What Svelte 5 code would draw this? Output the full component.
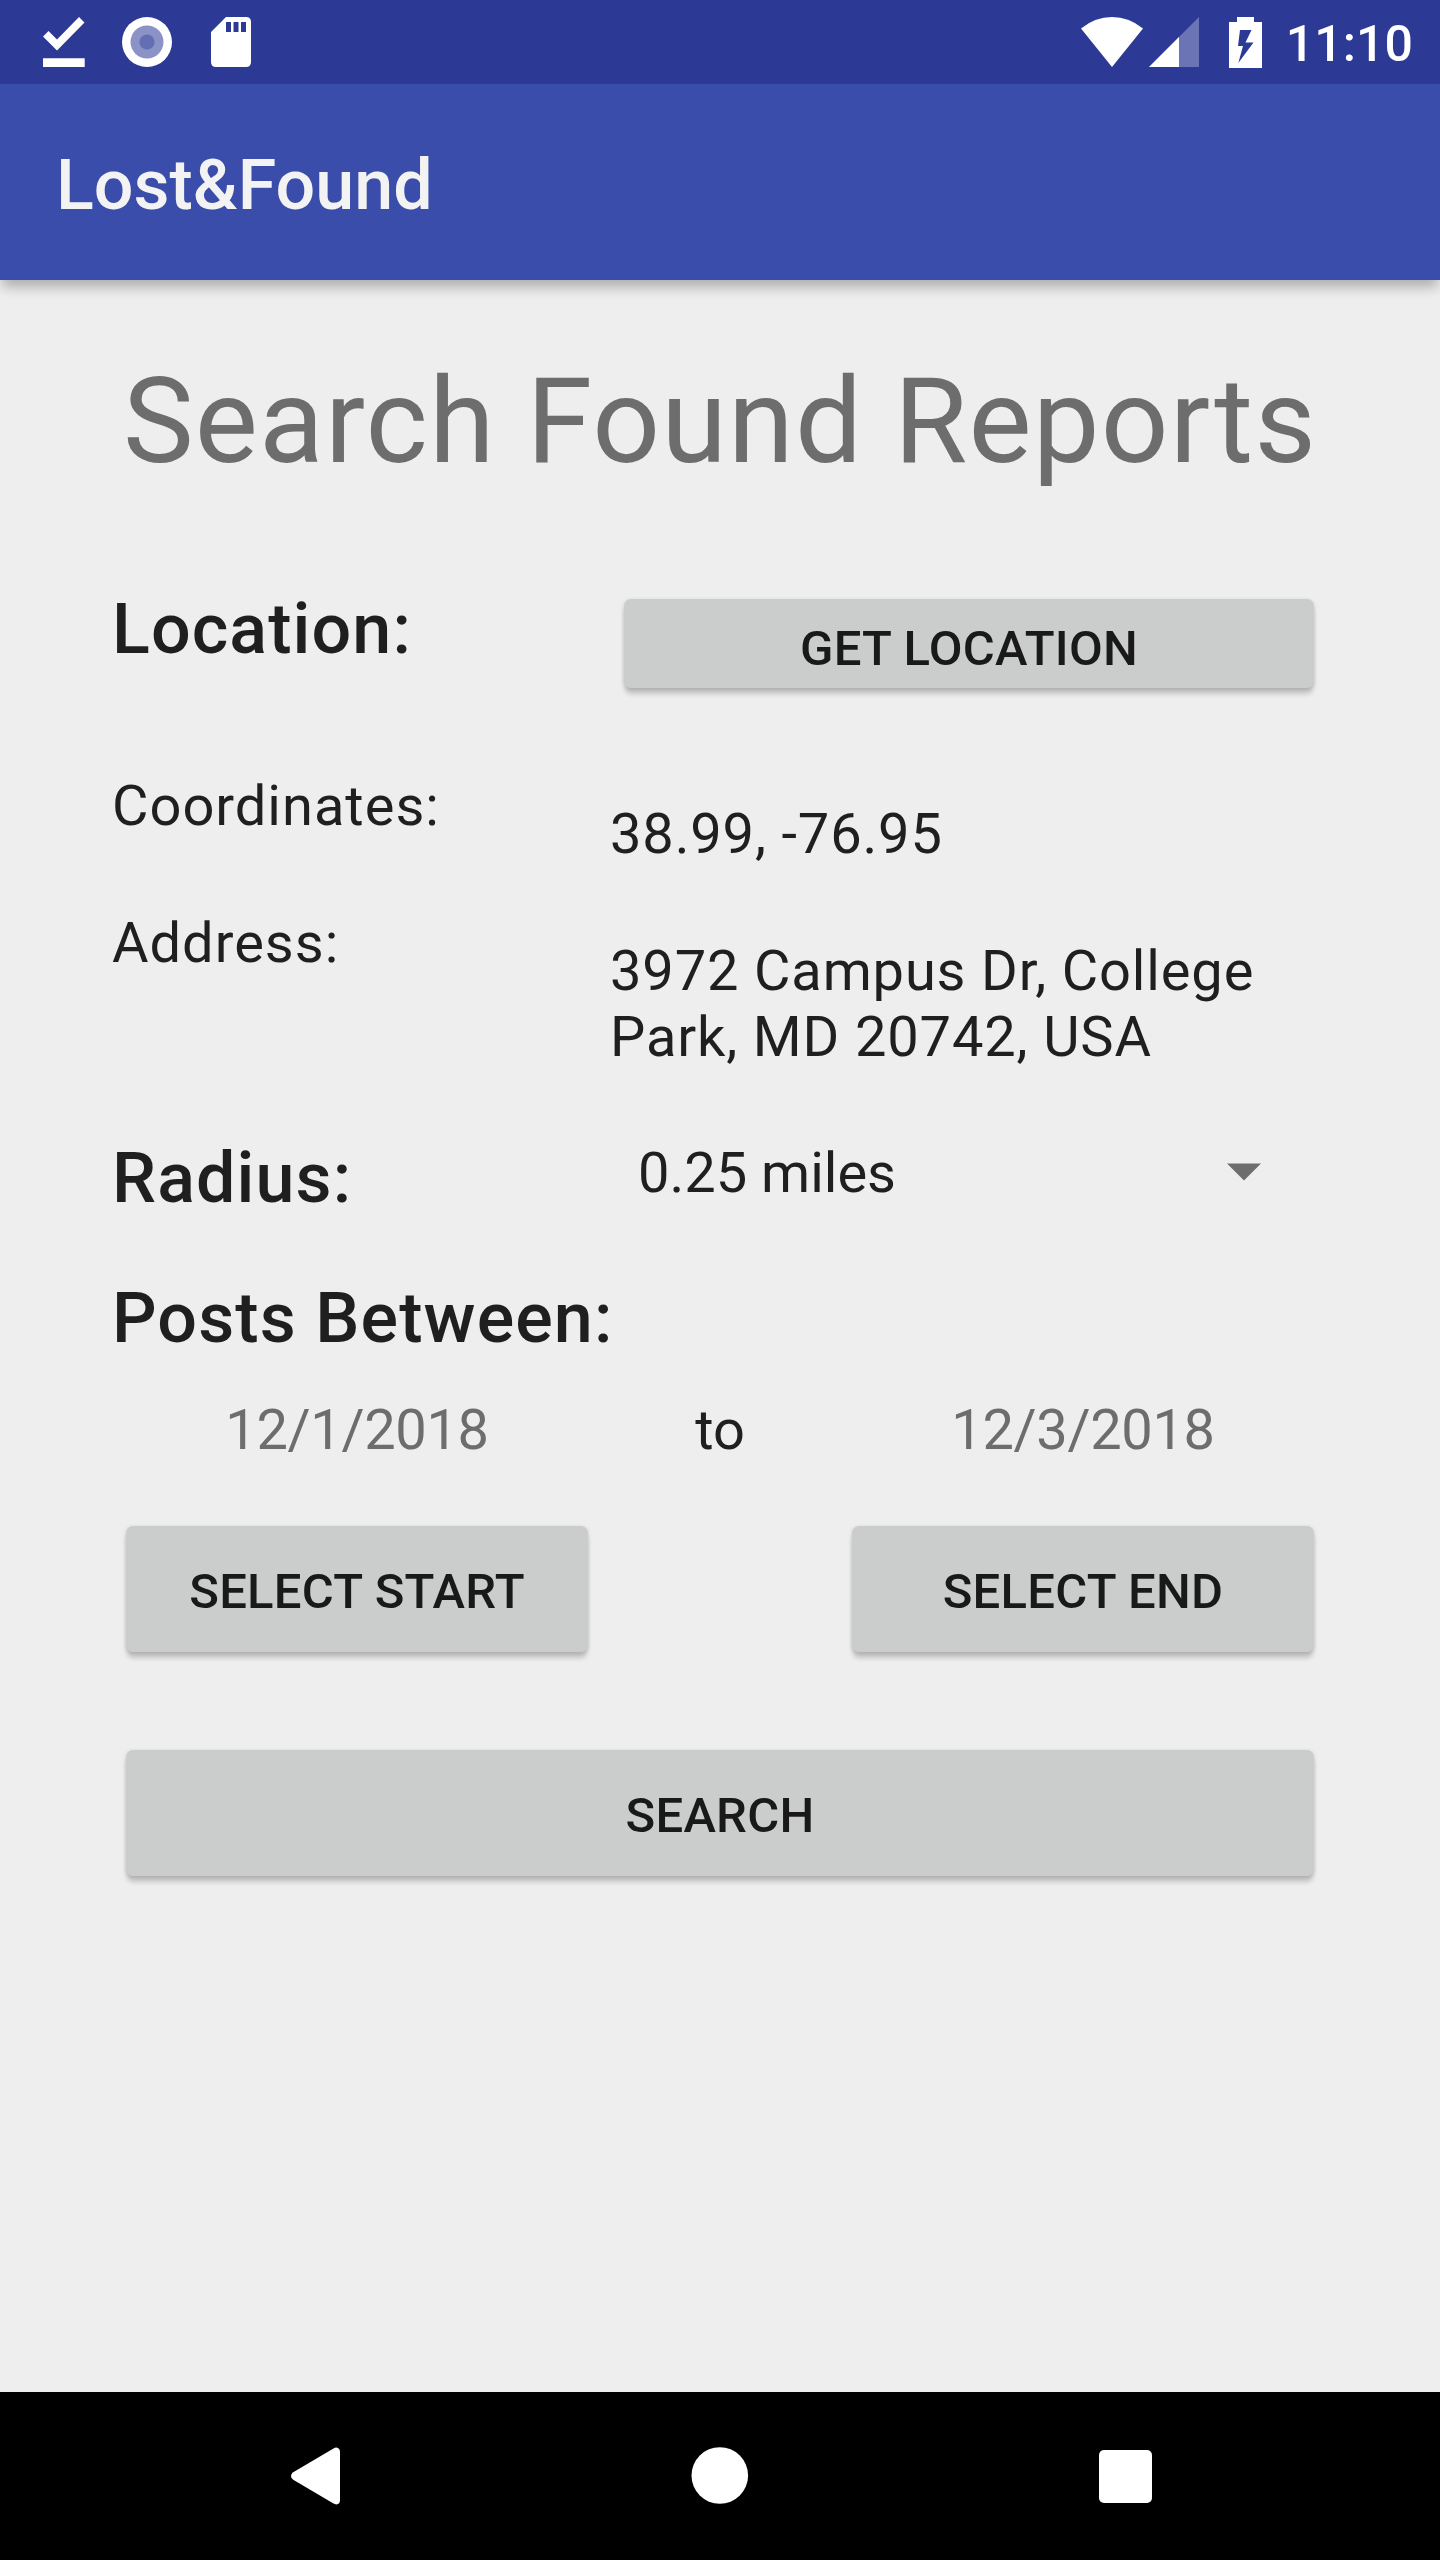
<script lang="ts">
  const location = {
    coordinates: '38.99, -76.95',
    address: '3972 Campus Dr, College Park, MD 20742, USA'
  };

  let radius = $state('0.25 miles');
  let startDate = $state('12/1/2018');
  let endDate = $state('12/3/2018');
</script>

<div class="screen">
  <div class="status-bar">
    <div class="notifications">
      <svg class="done" width="42" height="50" viewBox="0 0 42 50">
        <path d="M0 19.5 L5.5 14 L14 22.5 L36 0 L41.5 5.5 L14 33.5 Z M0 41.3 H41.7 V50 H0 Z" fill="#fff" />
      </svg>
      <svg class="record" width="50" height="50" viewBox="0 0 50 50">
        <circle cx="25" cy="25" r="25" fill="#fff" />
        <circle cx="25" cy="25" r="16.5" fill="#8b92c6" />
        <circle cx="25" cy="25" r="7.6" fill="#646eb2" />
      </svg>
      <svg class="sd-card" width="40" height="50" viewBox="0 0 40 50">
        <path
          fill="#fff"
          fill-rule="evenodd"
          d="M15 0 H35 Q40 0 40 5 V45 Q40 50 35 50 H5 Q0 50 0 45 V15 Z M15 5 V15 H20 V5 Z M22.5 5 V15 H27.5 V5 Z M30 5 V15 H35 V5 Z"
        />
      </svg>
    </div>
    <div class="system">
      <svg class="wifi" width="62" height="50" viewBox="0 0 62 50">
        <path d="M31 50 L0 11.5 Q14 0 31 0 Q48 0 62 11.5 Z" fill="#fff" />
      </svg>
      <svg class="signal" width="50" height="50" viewBox="0 0 50 50">
        <path d="M0 50 L50 0 V50 Z" fill="#fff" fill-opacity="0.3" />
        <path d="M0 50 L30 20 V50 Z" fill="#fff" />
      </svg>
      <svg class="battery" width="33" height="51" viewBox="0 0 33 51">
        <path
          fill="#fff"
          fill-rule="evenodd"
          d="M8 0 H25 V5 H33 V51 H0 V5 H8 Z M11 13 L9 29 H14 L9.3 46 L24.5 25.5 H16.5 L22.5 13 Z"
        />
      </svg>
      <span class="clock">11:10</span>
    </div>
  </div>

  <header class="app-bar">
    <span class="app-title">Lost&amp;Found</span>
  </header>

  <main class="content">
    <h1 class="heading">Search Found Reports</h1>

    <div class="row location-row">
      <h2 class="label">Location:</h2>
      <button class="button get-location">GET LOCATION</button>
    </div>

    <div class="row coordinates-row">
      <span class="field">Coordinates:</span>
      <span class="value">{location.coordinates}</span>
    </div>

    <div class="row address-row">
      <span class="field">Address:</span>
      <span class="value">{location.address}</span>
    </div>

    <div class="row radius-row">
      <h2 class="label">Radius:</h2>
      <div class="spinner">
        <span>{radius}</span>
        <svg width="34" height="17" viewBox="0 0 34 17">
          <path d="M0 -1.5 H34 L17 15.5 Z" fill="#6d6d6d" />
        </svg>
      </div>
    </div>

    <h2 class="label posts">Posts Between:</h2>

    <div class="range dates">
      <span class="date">{startDate}</span>
      <span>to</span>
      <span class="date">{endDate}</span>
    </div>

    <div class="range pickers">
      <button class="button">SELECT START</button>
      <span></span>
      <button class="button">SELECT END</button>
    </div>

    <button class="button search">SEARCH</button>
  </main>

  <nav class="nav-bar">
    <svg width="58" height="58" viewBox="0 0 58 58">
      <path d="M2.2 25.2 L42.5 1.4 Q45 0 47 1 Q49 2 49 4.5 V53.5 Q49 56 47 57 Q45 58 42.5 56.6 L2.2 32.8 Q0 31.3 0 29 Q0 26.7 2.2 25.2 Z" fill="#fff" />
    </svg>
    <svg width="58" height="58" viewBox="0 0 58 58">
      <circle cx="28.8" cy="28.5" r="28.3" fill="#fff" />
    </svg>
    <svg width="58" height="58" viewBox="0 0 58 58">
      <rect x="9" y="3" width="53" height="53" rx="5" fill="#fff" />
    </svg>
  </nav>
</div>

<style>
  :global(body) {
    margin: 0;
    background: #eeeeee;
  }

  .screen {
    display: flex;
    flex-direction: column;
    width: 1440px;
    height: 2560px;
    overflow: hidden;
    background: #eeeeee;
    color: #1f1f1f;
    font-family: Roboto, sans-serif;
    font-size: 56px;
    line-height: 66px;
  }

  svg {
    display: block;
    flex-shrink: 0;
    overflow: visible;
  }

  .status-bar {
    display: flex;
    justify-content: space-between;
    height: 84px;
    padding: 0 27px 0 43px;
    box-sizing: border-box;
    background: #2c3a96;
  }

  .notifications,
  .system {
    display: flex;
    align-items: center;
  }

  .record {
    margin-left: 37px;
  }

  .sd-card {
    margin-left: 39px;
  }

  .signal {
    margin-left: 6px;
  }

  .battery {
    margin-left: 30px;
  }

  .clock {
    margin-left: 24px;
    padding-top: 4px;
    color: #fff;
    font-size: 50px;
    font-weight: 500;
    line-height: 58px;
    letter-spacing: 0.1px;
  }

  .app-bar {
    display: flex;
    align-items: center;
    height: 196px;
    padding: 6px 56px 0;
    box-sizing: border-box;
    background: #3b4dab;
    box-shadow: 0 9px 12px -2px rgba(0, 0, 0, 0.27);
    clip-path: inset(0 0 -30px 0);
  }

  .app-title {
    color: #f3f3f3;
    font-size: 70px;
    font-weight: 500;
    line-height: 82px;
  }

  .content {
    flex: 1;
    padding: 72px 112px 0;
  }

  .heading {
    margin: 0;
    color: #6d6d6d;
    font-size: 119px;
    font-weight: 400;
    line-height: 140px;
    letter-spacing: 1.2px;
    text-align: center;
    white-space: nowrap;
  }

  .row {
    display: grid;
    grid-template-columns: 498px 718px;
    align-items: start;
  }

  .label {
    margin: 0;
    font-size: 70px;
    font-weight: 500;
    line-height: 82px;
    letter-spacing: 1.1px;
  }

  .field {
    letter-spacing: 1px;
  }

  .value {
    margin-top: 28px;
    letter-spacing: 0.85px;
  }

  .location-row {
    margin-top: 96px;
  }

  .coordinates-row {
    margin-top: 85px;
  }

  .address-row {
    margin-top: 43px;
  }

  .radius-row {
    margin-top: 67px;
  }

  .spinner {
    display: flex;
    align-items: center;
    justify-content: space-between;
    margin-top: 3px;
    padding: 0 67px 0 28px;
  }

  .posts {
    margin-top: 58px;
  }

  .range {
    display: grid;
    grid-template-columns: 462px 1fr 462px;
    padding: 0 14px;
    text-align: center;
  }

  .dates {
    margin-top: 38px;
  }

  .date {
    color: #6d6d6d;
    letter-spacing: -0.35px;
  }

  .pickers {
    margin-top: 63px;
  }

  .button {
    height: 126px;
    padding: 6px 0 0;
    border: none;
    border-radius: 7px;
    background: #cbcdcc;
    color: #191919;
    font-family: inherit;
    font-size: 49px;
    font-weight: 500;
    line-height: 58px;
    letter-spacing: 0.25px;
    box-shadow:
      0 7px 5px -1px rgba(0, 0, 0, 0.18),
      0 1px 4px rgba(0, 0, 0, 0.14);
  }

  .get-location {
    height: 89px;
    margin: 11px 14px 0;
    padding-top: 11px;
  }

  .search {
    display: block;
    width: 1188px;
    margin: 98px 14px 0;
  }

  .nav-bar {
    display: flex;
    align-items: center;
    justify-content: space-between;
    height: 168px;
    padding: 0 292px 0 291px;
    box-sizing: border-box;
    background: #000;
  }
</style>
